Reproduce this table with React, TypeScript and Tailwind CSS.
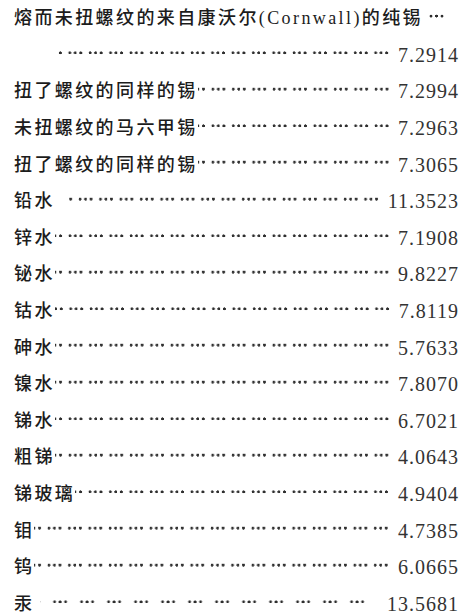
type Row = {
  label?: string;
  value?: string;
  indent?: boolean;
  gap?: "none" | "wide";
  sparse?: boolean;
  tail?: boolean;
};

const rows: Row[] = [
  { label: "熔而未扭螺纹的来自康沃尔(Cornwall)的纯锡", tail: true },
  { value: "7.2914", indent: true },
  { label: "扭了螺纹的同样的锡", value: "7.2994" },
  { label: "未扭螺纹的马六甲锡", value: "7.2963" },
  { label: "扭了螺纹的同样的锡", value: "7.3065" },
  { label: "铅水", value: "11.3523", gap: "wide" },
  { label: "锌水", value: "7.1908" },
  { label: "铋水", value: "9.8227" },
  { label: "钴水", value: "7.8119" },
  { label: "砷水", value: "5.7633" },
  { label: "镍水", value: "7.8070" },
  { label: "锑水", value: "6.7021" },
  { label: "粗锑", value: "4.0643" },
  { label: "锑玻璃", value: "4.9404" },
  { label: "钼", value: "4.7385" },
  { label: "钨", value: "6.0665" },
  { label: "汞", value: "13.5681", sparse: true },
];

// leader dots, drawn in groups of three like a run of "…"
const dots =
  "bg-[radial-gradient(circle_at_4px_44%,#2e2e2e_1.2px,transparent_1.7px),radial-gradient(circle_at_9.5px_44%,#2e2e2e_1.2px,transparent_1.7px),radial-gradient(circle_at_15px_44%,#2e2e2e_1.2px,transparent_1.7px)] bg-repeat-x bg-right";

export default function App() {
  return (
    <div className="w-[460px] h-[616px] bg-white overflow-hidden pl-[14px] pr-[1px] font-['Liberation_Serif','Noto_Sans_CJK_SC',serif] text-[#1c1c1c]">
      {rows.map((row, i) => (
        <div key={i} className="flex items-center h-[36.6px]">
          {row.label && (
            <span className="text-[18px] leading-none tracking-[2.4px] font-medium whitespace-nowrap">
              {row.label}
            </span>
          )}
          {row.tail ? (
            <span className={`ml-[4px] w-[20px] self-stretch bg-[length:20px_100%] ${dots}`} />
          ) : (
            <>
              <span
                className={`flex-1 self-stretch ${
                  row.sparse ? "bg-[length:27px_100%]" : "bg-[length:20.4px_100%]"
                } ${dots} ${row.indent ? "ml-[43px]" : ""} ${
                  row.gap === "wide" ? "ml-[12px]" : ""
                } ${row.sparse ? "ml-[6px] mr-[6px]" : ""}`}
              />
              <span className="ml-[6px] text-[20px] leading-none tracking-[1px] text-[#333]">
                {row.value}
              </span>
            </>
          )}
        </div>
      ))}
    </div>
  );
}
